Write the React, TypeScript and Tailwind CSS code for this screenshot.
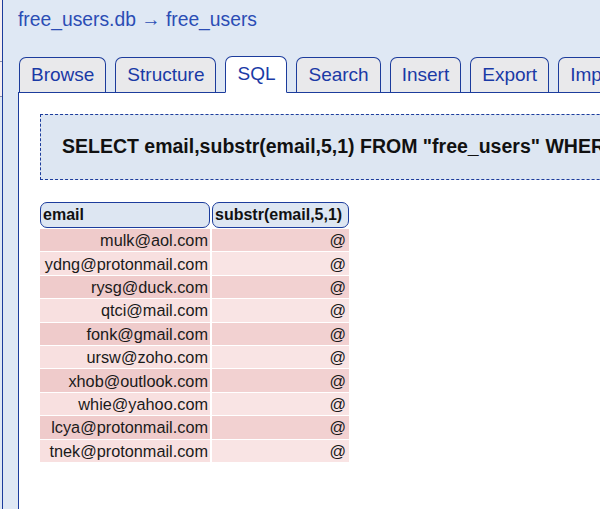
import React from "react";

const tabs = ["Browse", "Structure", "SQL", "Search", "Insert", "Export", "Import"];

const rows = [
  "mulk@aol.com",
  "ydng@protonmail.com",
  "rysg@duck.com",
  "qtci@mail.com",
  "fonk@gmail.com",
  "ursw@zoho.com",
  "xhob@outlook.com",
  "whie@yahoo.com",
  "lcya@protonmail.com",
  "tnek@protonmail.com",
];

function Tab({ label, active }: { label: string; active?: boolean }) {
  return (
    <div
      className={`shrink-0 rounded-t-[7px] border border-[#1c3c9c] px-[11px] text-[19px] leading-[34px] text-[#1a3aa6] ${
        active ? "relative z-10 -mb-px border-b-white bg-white pb-px" : "border-b-0 bg-[#e9e9eb]"
      }`}
    >
      {label}
    </div>
  );
}

export default function App() {
  return (
    <div className="flex h-[509px] w-[600px] overflow-hidden bg-[#dfe8f4] font-['Liberation_Sans',Arial,sans-serif]">
      {/* sidebar edge, mostly off-screen */}
      <div className="flex w-[3px] shrink-0 flex-col border-r border-[#1c3c9c]">
        <div className="h-[62px] border-b border-[#8a8fa8] bg-[#f6eef0]" />
        <div className="h-[35px] border-b border-[#8a8fa8] bg-[#f6eef0]" />
        <div className="flex-1 bg-[#dfe8f4]" />
      </div>

      <div className="ml-[15px] flex min-w-0 flex-1 flex-col pt-[8px]">
        <h1 className="whitespace-nowrap text-[19.3px] leading-[24px] text-[#2b4db5]">
          free_users.db → free_users
        </h1>

        <div className="ml-[1px] mt-[24px] flex items-end gap-[9px]">
          {tabs.map((t) => (
            <Tab key={t} label={t} active={t === "SQL"} />
          ))}
        </div>

        <div className="flex-1 border-l border-t border-[#1c3c9c] bg-white pl-[21px] pt-[21px]">
          <div className="flex h-[66px] w-[700px] items-center border border-dashed border-[#1c3c9c] bg-[#dde6f2] pl-[21px]">
            <span className="whitespace-nowrap text-[19.5px] font-bold text-[#111]">
              SELECT email,substr(email,5,1) FROM "free_users" WHERE email LIKE '%@%'
            </span>
          </div>

          <table className="-ml-[2px] mt-[21px] border-separate border-spacing-x-[2px] border-spacing-y-[1px] text-[16.3px] text-[#1a1a1a]">
            <thead>
              <tr>
                <th className="h-[25px] w-[170px] rounded-[7px] border border-[#1c3c9c] bg-[#dde6f2] px-[2px] text-left text-[16px] font-bold text-[#111]">
                  email
                </th>
                <th className="h-[25px] w-[137px] rounded-[7px] border border-[#1c3c9c] bg-[#dde6f2] px-[2px] text-left text-[16px] font-bold text-[#111]">
                  substr(email,5,1)
                </th>
              </tr>
            </thead>
            <tbody>
              {rows.map((email, i) => (
                <tr key={email} className="h-[22.4px]">
                  <td
                    className={`px-[2px] text-right leading-[22px] ${
                      i % 2 === 0 ? "bg-[#efcbcb]" : "bg-[#f8e0e0]"
                    }`}
                  >
                    {email}
                  </td>
                  <td
                    className={`px-[3px] text-right leading-[22px] ${
                      i % 2 === 0 ? "bg-[#f2d1d1]" : "bg-[#f9e4e4]"
                    }`}
                  >
                    @
                  </td>
                </tr>
              ))}
            </tbody>
          </table>
        </div>
      </div>
    </div>
  );
}
